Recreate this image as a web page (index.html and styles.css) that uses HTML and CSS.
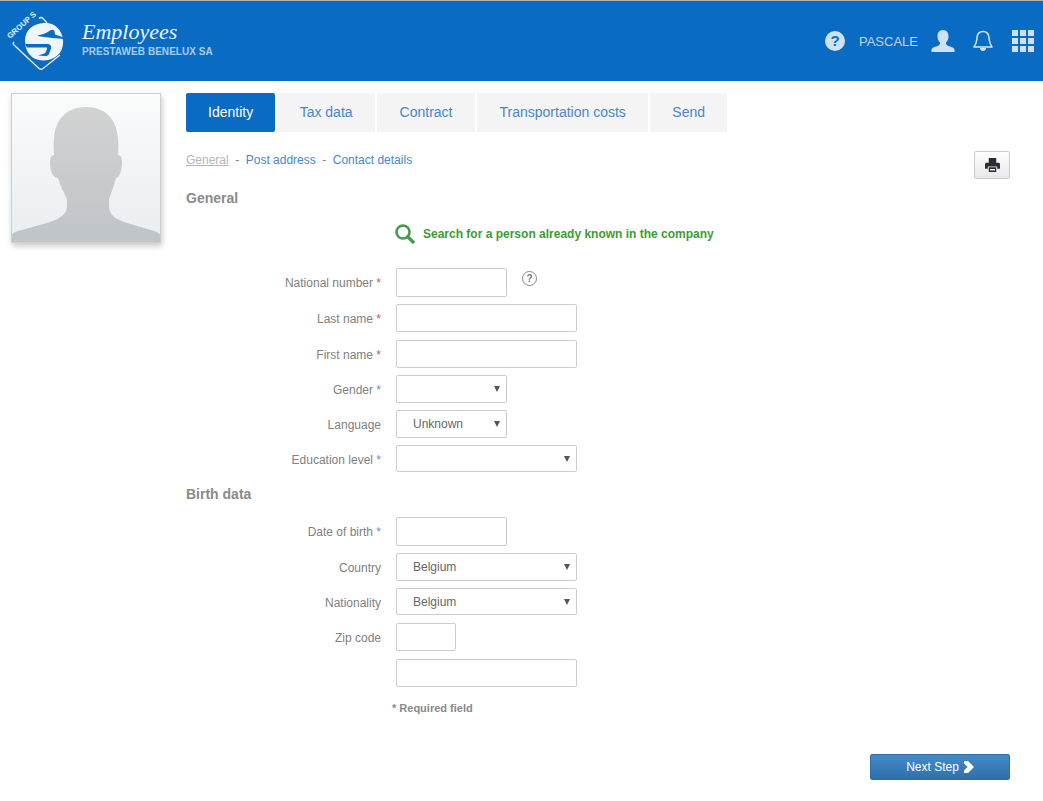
FILE: index.html
```html
<!DOCTYPE html>
<html lang="en">
<head>
<meta charset="utf-8">
<title>Employees</title>
<link rel="stylesheet" href="styles.css">
</head>
<body>
<header class="topbar">
  <div class="brand">
    <svg class="logo" width="70" height="80" viewBox="0 1 70 80" aria-hidden="true">
      <path d="M47 23 L43 18.500 Q41 16.500 39 18.500 M14 42 Q12.500 43.500 14 45 L39 68.500 Q41 70 43 68.500 L60 55" fill="none" stroke="#e8f1fa" stroke-width="1.300"/>
      <text class="logo-text" transform="rotate(-42 10 39)" x="10" y="39">GROUP S</text>
      <path d="M44 23 C54 22 62 29 63 40 C64 52 56 60 44 60.500 C32 61 25 52 25 41 C25 30 33 23.500 44 23 Z" fill="#eef5fc"/>
      <path d="M37 35.500 C42 35 47 33 50 30.500 C52 29 54 29.500 54.500 31.500 L55 34.500 L64 37.500 L64 39 L48 37.500 C44 37 40 36.500 37 35.500 Z" fill="#0a6bc2"/>
      <path d="M25 44 L48 44 C50.500 44.500 51.500 46 51 48.500 L49 54 C48.500 55.500 47 56 45 56 L38 55.500 L44.500 53.500 C46 52.500 47 50 47 47.500 L27 47.500 Z" fill="#0a6bc2"/>
    </svg>
    <div class="brand-text">
      <div class="brand-title">Employees</div>
      <div class="brand-sub">PRESTAWEB BENELUX SA</div>
    </div>
  </div>
  <div class="top-actions">
    <span class="help-icon">?</span>
    <span class="user-name">PASCALE</span>
    <svg class="user-icon" width="24" height="22" viewBox="0 0 24 22" aria-hidden="true">
      <path d="M12 0 C8 0 6.500 3 6.500 6.500 C6.500 9.500 7.800 11.500 9 12.500 C9.200 14 8.500 15 7 15.800 C4 17 1 17.500 .5 19.500 V22 H23.500 V19.500 C23 17.500 20 17 17 15.800 C15.500 15 14.800 14 15 12.500 C16.200 11.500 17.500 9.500 17.500 6.500 C17.500 3 16 0 12 0 Z" fill="#cfe2f3"/>
    </svg>
    <svg class="bell-icon" width="20" height="22" viewBox="0 0 20 22" aria-hidden="true">
      <path d="M10 1.500 C6 1.500 4.200 4.500 4 8 C3.800 12 3 14.500 1 17 H19 C17 14.500 16.200 12 16 8 C15.800 4.500 14 1.500 10 1.500 Z" fill="none" stroke="#d5e6f5" stroke-width="1.500" stroke-linejoin="round"/>
      <path d="M7 18 H13 C13 20 11.500 21 10 21 C8.500 21 7 20 7 18 Z" fill="#d5e6f5"/>
    </svg>
    <div class="apps-grid">
      <i></i><i></i><i></i><i></i><i></i><i></i><i></i><i></i><i></i>
    </div>
  </div>
</header>

<div class="page">
  <aside class="photo">
    <svg width="150" height="150" viewBox="0 0 150 150" aria-hidden="true">
      <defs>
        <linearGradient id="sil" x1="0" y1="0" x2="0" y2="1">
          <stop offset="0" stop-color="#d2d2d2"/>
          <stop offset="1" stop-color="#bfc4c9"/>
        </linearGradient>
      </defs>
      <path d="M0 150 V143 C2 140 4 139 7 138 L36 130 C46 127 56 122 56 114 V106 C52 98 49 92 47 85 C42 85 39 78 39 69 C39 64 41 62 43 62 C43 58 42 52 43 46 C44 26 56 14 75 14 C94 14 106 26 107 46 C108 52 107 58 107 62 C109 62 111 64 111 69 C111 78 108 85 105 85 C103 92 101 98 98 106 V114 C98 122 106 127 116 130 L143 138 C146 139 148 140 150 143 V150 Z" fill="url(#sil)"/>
    </svg>
  </aside>

  <main class="content">
    <nav class="tabs">
      <a class="tab tab-active">Identity</a>
      <a class="tab">Tax data</a>
      <a class="tab">Contract</a>
      <a class="tab">Transportation costs</a>
      <a class="tab tab-last">Send</a>
    </nav>

    <div class="subnav-row">
      <div class="subnav">
        <a class="sub-current">General</a>
        <span class="sep">-</span>
        <a class="sub-link">Post address</a>
        <span class="sep">-</span>
        <a class="sub-link">Contact details</a>
      </div>
      <button class="print-btn" type="button" aria-label="Print">
        <svg width="15" height="14" viewBox="0 0 16 15" aria-hidden="true">
          <path d="M4 0 H12 V5 H14.500 C15.300 5 16 5.700 16 6.500 V11.500 H13 V9 H3 V11.500 H0 V6.500 C0 5.700 .7 5 1.500 5 H4 Z" fill="#2b2b33"/>
          <path d="M4 10 H12 V15 H4 Z M5.300 11.800 V13.500 H10.700 V11.800 Z" fill="#2b2b33" fill-rule="evenodd"/>
        </svg>
      </button>
    </div>

    <h2 class="section-title section-general">General</h2>

    <div class="search-line">
      <svg width="20" height="20" viewBox="0 0 20 20" aria-hidden="true">
        <circle cx="8" cy="8" r="6.500" fill="none" stroke="#4a9a4e" stroke-width="2.600"/>
        <path d="M12.800 12.800 L18 18" stroke="#4a9a4e" stroke-width="3.400" stroke-linecap="round"/>
      </svg>
      <span>Search for a person already known in the company</span>
    </div>

    <form class="form">
      <div class="row row-tall">
        <label class="lbl">National number <em class="req-red">*</em></label>
        <input class="field w-m" type="text">
        <span class="hint">?</span>
      </div>
      <div class="row">
        <label class="lbl">Last name <em class="req-red">*</em></label>
        <input class="field w-l" type="text">
      </div>
      <div class="row row-step">
        <label class="lbl">First name <em class="req-red">*</em></label>
        <input class="field w-l" type="text">
      </div>
      <div class="row row-step">
        <label class="lbl">Gender <em class="req-blue">*</em></label>
        <div class="select w-m"><select><option></option></select></div>
      </div>
      <div class="row row-step">
        <label class="lbl">Language</label>
        <div class="select w-m"><select><option>Unknown</option></select></div>
      </div>
      <div class="row row-short">
        <label class="lbl">Education level <em class="req-blue">*</em></label>
        <div class="select w-l"><select><option></option></select></div>
      </div>

      <h2 class="section-title section-birth">Birth data</h2>

      <div class="row row-tall">
        <label class="lbl">Date of birth <em class="req-blue">*</em></label>
        <input class="field w-m" type="text">
      </div>
      <div class="row row-step">
        <label class="lbl">Country</label>
        <div class="select w-l"><select><option>Belgium</option></select></div>
      </div>
      <div class="row row-short">
        <label class="lbl">Nationality</label>
        <div class="select w-l"><select><option>Belgium</option></select></div>
      </div>
      <div class="row">
        <label class="lbl">Zip code</label>
        <input class="field w-s" type="text">
      </div>
      <div class="row">
        <span class="lbl"></span>
        <input class="field w-l" type="text">
      </div>
    </form>

    <p class="required-note">* Required field</p>

    <div class="footer-actions">
      <button class="next-btn" type="button">Next Step
        <svg width="11" height="12" viewBox="0 0 11 12" aria-hidden="true">
          <path d="M1 0 H5 L11 6 L5 12 H1 L1 9.500 L4.500 6 L1 2.500 Z" fill="#fff"/>
        </svg>
      </button>
    </div>
  </main>
</div>
</body>
</html>
```
FILE: styles.css
```css
* { box-sizing: border-box; }

html, body {
  margin: 0;
  padding: 0;
  background: #fff;
  font-family: "Liberation Sans", Arial, sans-serif;
  font-size: 12px;
  color: #808080;
}

.topbar {
  height: 81px;
  background: #0a6bc2;
  border-top: 1px solid #b5b5b5;
  display: flex;
  justify-content: space-between;
  align-items: flex-start;
}

.brand {
  display: flex;
  align-items: flex-start;
}

.logo { display: block; }

.logo-text {
  font-family: "Liberation Sans", Arial, sans-serif;
  font-weight: 700;
  font-size: 7.800px;
  fill: #e8f1fa;
}

.brand-text {
  margin: 18px 0 0 12px;
}

.brand-title {
  font-family: "Liberation Serif", "Times New Roman", serif;
  font-style: italic;
  font-size: 22px;
  line-height: 26px;
  color: #eef5fc;
}

.brand-sub {
  margin-top: 1px;
  font-weight: 700;
  font-size: 10px;
  line-height: 12px;
  letter-spacing: .05px;
  color: #a9cbea;
}

.top-actions {
  display: flex;
  align-items: center;
  margin: 29px 9px 0 0;
  height: 22px;
}

.help-icon {
  width: 20px;
  height: 20px;
  border-radius: 50%;
  background: #cfe2f3;
  color: #0a6bc2;
  font-weight: 700;
  font-size: 15px;
  line-height: 20px;
  text-align: center;
}

.user-name {
  margin-left: 14px;
  font-size: 13px;
  color: #bcd6ee;
}

.user-icon { margin-left: 13px; }
.bell-icon { margin-left: 18px; }

.apps-grid {
  margin-left: 19px;
  display: grid;
  grid-template-columns: repeat(3, 6px);
  grid-auto-rows: 6px;
  gap: 2px;
}

.apps-grid i {
  display: block;
  background: #cfdff0;
}

.page {
  display: flex;
  align-items: flex-start;
  padding: 12px 33px 0 11px;
}

.photo {
  flex: none;
  width: 150px;
  height: 150px;
  background: linear-gradient(#fafbfb, #e9edf1);
  outline: 1px solid #d0d0d0;
  outline-offset: -1px;
  box-shadow: 1px 3px 6px rgba(0, 0, 0, .22);
}

.photo svg { display: block; }

.content {
  flex: 1;
  margin-left: 25px;
}

.tabs {
  display: flex;
  gap: 2px;
}

.tab {
  height: 39px;
  padding: 0 22.500px;
  font-size: 14px;
  line-height: 39px;
  color: #4a86c8;
  background: #f4f4f4;
}

.tab-active {
  padding: 0 22px;
  background: #0a6bc2;
  color: #fff;
  border-radius: 2px;
}

.tab-last { padding: 0 22px; }

.subnav-row {
  display: flex;
  justify-content: space-between;
  align-items: flex-start;
  margin-top: 19px;
  height: 28px;
}

.subnav {
  line-height: 18px;
  display: flex;
  gap: 6px;
}

.sub-current {
  color: #b5b5b5;
  text-decoration: underline;
}

.sub-link { color: #4a86c8; }
.sep { color: #808080; margin: 0 .5px; }

.print-btn {
  width: 36px;
  height: 28px;
  padding: 0;
  border: 1px solid #ccc;
  border-radius: 2px;
  background: linear-gradient(#fff, #e8e8e8);
  display: flex;
  align-items: center;
  justify-content: center;
}

.section-title {
  margin: 0;
  font-size: 14px;
  font-weight: 700;
  line-height: 18px;
  color: #8a8a8a;
}

.section-general { margin-top: 10px; }
.section-birth { margin: 13px 0 14px; }

.search-line {
  display: flex;
  align-items: center;
  margin: 17px 0 0 209px;
  height: 20px;
  font-weight: 700;
  color: #3d9a35;
}

.search-line svg { margin-right: 8px; }

.form { margin-top: 24px; }

.row {
  display: flex;
  align-items: center;
  height: 28px;
  margin-bottom: 8px;
}

.row-tall { height: 29px; margin-bottom: 7px; }
.row-step { margin-bottom: 7px; }
.row-short { height: 27px; margin-bottom: 8px; }

.lbl {
  flex: none;
  width: 195px;
  margin-right: 15px;
  padding-top: 2px;
  text-align: right;
  color: #808080;
}

.row-tall .lbl { padding-top: 0; }

.lbl em { font-style: normal; }
.req-red { color: #c0605d; }
.req-blue { color: #5f8fc4; }

.field, .select select {
  height: 100%;
  border: 1px solid #ccc;
  border-radius: 2px;
  background: #fff;
  font: 12px "Liberation Sans", Arial, sans-serif;
  color: #666;
}

.field { display: block; padding: 0 8px; }

.w-s { width: 60px; }
.w-m { width: 111px; }
.w-l { width: 181px; }

.select {
  position: relative;
  height: 100%;
}

.select select {
  width: 100%;
  padding: 0 20px 0 16px;
  appearance: none;
  -webkit-appearance: none;
}

.select::after {
  content: "";
  position: absolute;
  right: 7px;
  top: 50%;
  margin-top: -3px;
  border-style: solid;
  border-width: 6px 3px 0;
  border-color: #555 transparent transparent;
}

.hint {
  width: 15px;
  height: 15px;
  margin: -9px 0 0 15px;
  border: 1px solid #888;
  border-radius: 50%;
  font-size: 10px;
  font-weight: 700;
  line-height: 13px;
  text-align: center;
  color: #777;
}

.required-note {
  margin: 14px 0 0 206px;
  font-size: 11px;
  font-weight: 700;
  line-height: 14px;
  color: #8a8a8a;
}

.footer-actions {
  display: flex;
  justify-content: flex-end;
  margin-top: 39px;
}

.next-btn {
  width: 140px;
  height: 26px;
  padding: 0;
  border: 1px solid #2e6da4;
  border-radius: 2px;
  background: linear-gradient(#428bca, #2f70a9);
  color: #fff;
  font: 12px "Liberation Sans", Arial, sans-serif;
  display: flex;
  align-items: center;
  justify-content: center;
  gap: 4px;
}
```
